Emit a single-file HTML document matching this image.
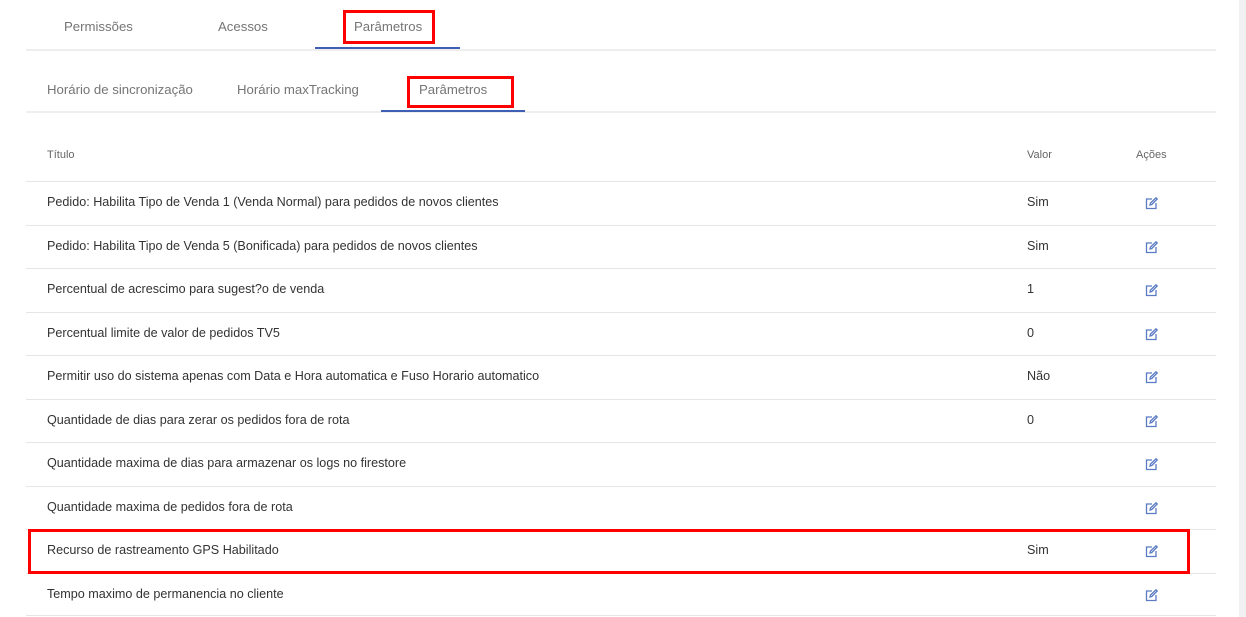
<!DOCTYPE html>
<html><head><style>
body{margin:0;width:1246px;height:617px;background:#fff;font-family:"Liberation Sans",sans-serif;position:relative;overflow:hidden}
.a{position:absolute;white-space:nowrap}
.t{color:#757575;font-size:13.2px}
.r{position:absolute;left:26px;width:1190px;height:1px;background:#e6e6e6}
.c{color:#333;font-size:12.6px}
.box{position:absolute;border:3px solid #f00;box-sizing:border-box}
</style></head><body>
<div class="a" style="right:0;top:0;width:7px;height:617px;background:#f1f1f4"></div>
<div class="a t" style="left:64px;top:19px">Permissões</div>
<div class="a t" style="left:218px;top:19px">Acessos</div>
<div class="a t" style="left:354px;top:19px">Parâmetros</div>
<div class="r" style="top:49px;height:2px;background:#eee"></div>
<div class="a" style="left:315px;top:47px;width:145px;height:2px;background:#3f5fb5"></div>
<div class="box" style="left:343px;top:10px;width:92px;height:34px"></div>
<div class="a t" style="left:47px;top:82px">Horário de sincronização</div>
<div class="a t" style="left:237px;top:82px">Horário maxTracking</div>
<div class="a t" style="left:419px;top:82px">Parâmetros</div>
<div class="r" style="top:111px;height:2px;background:#eee"></div>
<div class="a" style="left:381px;top:110px;width:144px;height:2px;background:#3f5fb5"></div>
<div class="box" style="left:407px;top:76px;width:107px;height:32px"></div>
<div class="a" style="left:47px;top:149px;font-size:11px;color:#666">Título</div>
<div class="a" style="left:1027px;top:149px;font-size:11px;color:#666">Valor</div>
<div class="a" style="left:1136px;top:149px;font-size:11px;color:#666">Ações</div>
<div id="rows"></div>
<div class="box" style="left:28px;top:529px;width:1162px;height:45px"></div>
<script>
var d=[["Pedido: Habilita Tipo de Venda 1 (Venda Normal) para pedidos de novos clientes","Sim"],["Pedido: Habilita Tipo de Venda 5 (Bonificada) para pedidos de novos clientes","Sim"],["Percentual de acrescimo para sugest?o de venda","1"],["Percentual limite de valor de pedidos TV5","0"],["Permitir uso do sistema apenas com Data e Hora automatica e Fuso Horario automatico","Não"],["Quantidade de dias para zerar os pedidos fora de rota","0"],["Quantidade maxima de dias para armazenar os logs no firestore",""],["Quantidade maxima de pedidos fora de rota",""],["Recurso de rastreamento GPS Habilitado","Sim"],["Tempo maximo de permanencia no cliente",""]];
var h='';
for(var i=0;i<d.length;i++){var y=181+i*43.5;
h+='<div class="r" style="top:'+y+'px"></div>';
h+='<div class="a c" style="left:47px;top:'+(y+14)+'px">'+d[i][0]+'</div>';
h+='<div class="a c" style="left:1027px;top:'+(y+14)+'px">'+d[i][1]+'</div>';
h+='<svg class="a" style="left:1145px;top:'+(y+16)+'px" width="13" height="13" viewBox="0 0 13 13" fill="none" stroke="#5b7bc4" stroke-width="1.3"><path d="M7 2H1.5v9.5H11V6"/><path d="M5 8l.5-2L11 .8l1.2 1.2L6.8 7.5z"/></svg>';}
h+='<div class="r" style="top:615px"></div>';
document.getElementById('rows').innerHTML=h;
</script>
</body></html>
